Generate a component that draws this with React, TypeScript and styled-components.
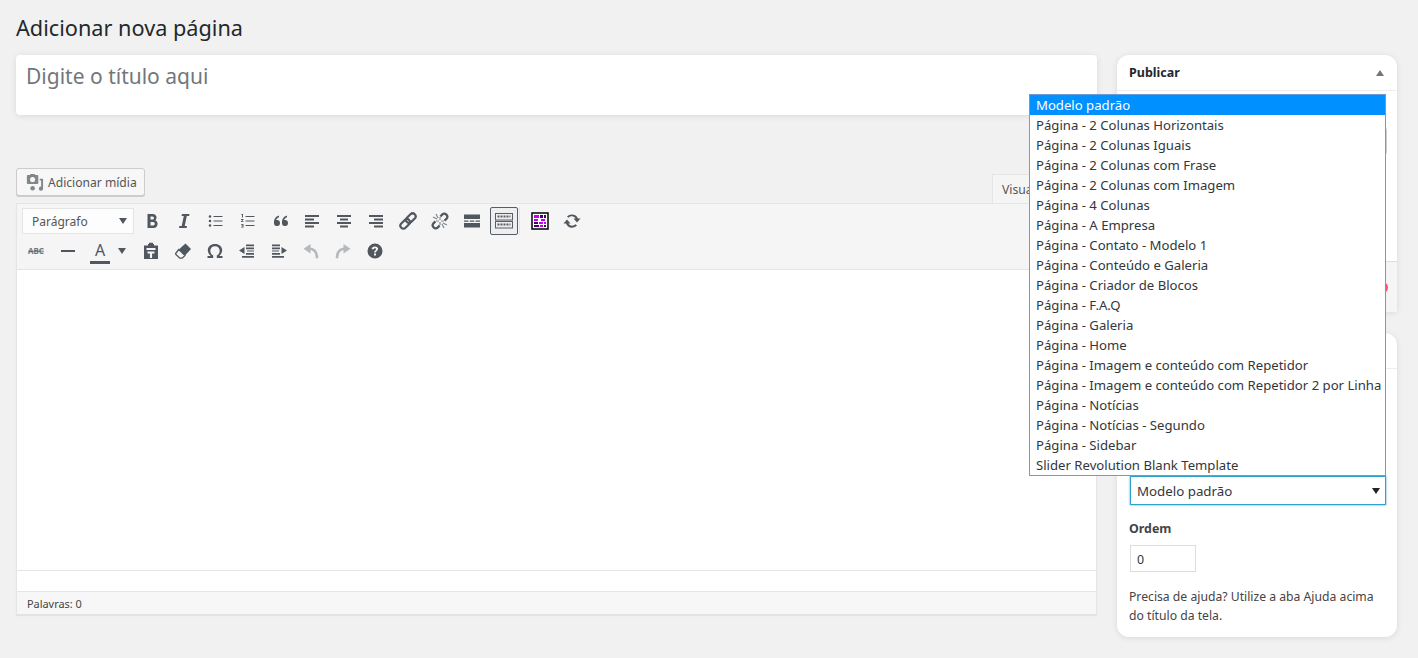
import styled, { createGlobalStyle } from "styled-components";
import type { ReactNode } from "react";

const GlobalStyle = createGlobalStyle`
	html, body {
		margin: 0;
		padding: 0;
		background: #f1f1f1;
	}
	body {
		font-family: "Noto Sans", "Open Sans", sans-serif;
		color: #444;
		overflow: hidden;
	}
`;

const Page = styled.div`
	position: relative;
	width: 1418px;
	height: 658px;
	box-sizing: border-box;
	padding: 13px 21px 0 16px;
	display: grid;
	grid-template-columns: 1081px 280px;
	column-gap: 20px;
	align-content: start;
`;

const Heading = styled.h1`
	grid-column: 1 / 3;
	margin: 0 0 11px;
	height: 31px;
	font-size: 21.7px;
	line-height: 29px;
	font-weight: 400;
	color: #23282d;
`;

const Main = styled.div`
	display: flex;
	flex-direction: column;
`;

const TitleBox = styled.div`
	height: 60px;
	box-sizing: border-box;
	padding: 6px 10px;
	background: #fff;
	border-radius: 4px;
	box-shadow: 0 1px 6px rgba(0, 0, 0, 0.1);
	font-size: 21px;
	line-height: 30px;
	color: #72777c;
`;

const MediaRow = styled.div`
	margin-top: 53px;
	height: 35px;
	display: flex;
	justify-content: space-between;
	align-items: flex-start;
`;

const MediaButton = styled.div`
	width: 129px;
	height: 28px;
	box-sizing: border-box;
	display: flex;
	align-items: center;
	gap: 4px;
	padding-left: 8px;
	background: #f7f7f7;
	border: 1px solid #ccc;
	border-radius: 3px;
	box-shadow: 0 1px 0 #ccc;
	font-size: 12.1px;
	color: #555;
`;

const VisualTab = styled.div`
	align-self: flex-end;
	width: 105px;
	height: 29px;
	box-sizing: border-box;
	padding: 6px 0 0 9px;
	background: #f5f5f5;
	border: 1px solid #e5e5e5;
	border-bottom: 0;
	font-size: 12.2px;
	line-height: 18px;
	color: #555;
`;

const Editor = styled.div`
	height: 412px;
	box-sizing: border-box;
	display: flex;
	flex-direction: column;
	background: #fff;
	border: 1px solid #e5e5e5;
	box-shadow: 0 1px 1px rgba(0, 0, 0, 0.06);
`;

const Toolbar = styled.div`
	height: 66px;
	flex: none;
	box-sizing: border-box;
	padding: 2px 0 0 5px;
	background: #f5f5f5;
	border-bottom: 1px solid #e5e5e5;
	display: flex;
	flex-direction: column;
`;

const ToolRow = styled.div`
	height: 30px;
	display: flex;
	align-items: center;
`;

const FormatSelect = styled.div`
	width: 112px;
	height: 26px;
	margin-right: 4px;
	box-sizing: border-box;
	display: flex;
	align-items: center;
	justify-content: space-between;
	padding: 0 6px 0 9px;
	background: #fdfdfd;
	border: 1px solid #e5e5e5;
	font-size: 12px;
	color: #555;
`;

const Caret = styled.span<{ $tone?: string }>`
	width: 0;
	height: 0;
	border-left: 4.5px solid transparent;
	border-right: 4.5px solid transparent;
	border-top: 6px solid ${(p) => p.$tone ?? "#50575e"};
`;

const ToolButton = styled.div<{ $active?: boolean }>`
	width: 28px;
	height: 28px;
	margin-right: 4px;
	box-sizing: border-box;
	flex: none;
	display: flex;
	align-items: center;
	justify-content: center;
	color: #50575e;
	border: 1px solid ${(p) => (p.$active ? "#555d66" : "transparent")};
	border-radius: 2px;
	background: ${(p) => (p.$active ? "#eee" : "transparent")};
`;

const ColorButton = styled.div`
	width: 47px;
	height: 28px;
	margin-right: 4px;
	box-sizing: border-box;
	flex: none;
	display: flex;
	align-items: center;
	gap: 8px;
	padding-left: 4px;
`;

const ColorLetter = styled.span`
	width: 20px;
	height: 21px;
	margin-top: 1px;
	border-bottom: 3px solid #50575e;
	text-align: center;
	font-size: 16px;
	line-height: 20px;
	color: #50575e;
`;

const ToolDivider = styled.div`
	width: 1px;
	height: 28px;
	margin: 0 6px 0 -3px;
	background: #e5e5e5;
`;

const Area = styled.div`
	flex: 1;
	background: #fff;
	border-bottom: 1px solid #e5e5e5;
`;

const Spacer = styled.div`
	height: 20px;
	flex: none;
	background: #fff;
	border-bottom: 1px solid #e5e5e5;
`;

const StatusBar = styled.div`
	height: 22px;
	flex: none;
	box-sizing: border-box;
	padding-left: 10px;
	background: #f7f7f7;
	font-size: 10.9px;
	line-height: 24px;
	color: #444;
`;

const Side = styled.div`
	display: flex;
	flex-direction: column;
	gap: 21px;
`;

const Card = styled.div<{ $height: number }>`
	height: ${(p) => p.$height}px;
	box-sizing: border-box;
	background: #fff;
	border-radius: 12px;
	box-shadow: 0 1px 6px rgba(0, 0, 0, 0.1);
	overflow: hidden;
`;

const PublishCard = styled(Card)`
	border-radius: 12px 12px 0 0;
`;

const CardHeader = styled.div`
	height: 36px;
	box-sizing: border-box;
	padding: 0 13px 0 12px;
	display: flex;
	align-items: center;
	justify-content: space-between;
	border-bottom: 1px solid #eee;
	font-size: 12.5px;
	font-weight: 700;
	color: #23282d;
`;

const UpArrow = styled.span`
	width: 0;
	height: 0;
	border-left: 4.5px solid transparent;
	border-right: 4.5px solid transparent;
	border-bottom: 6px solid #72777c;
`;

const PublishBody = styled.div`
	position: relative;
	height: 221px;
`;

const PublishFooter = styled.div`
	position: absolute;
	left: 0;
	right: 0;
	bottom: 0;
	height: 51px;
	box-sizing: border-box;
	background: #f5f5f5;
	border-top: 1px solid #ddd;
`;

const HiddenButton = styled.div`
	position: absolute;
	right: 10px;
	top: 36px;
	width: 60px;
	height: 26px;
	background: #f7f7f7;
	border: 1px solid #ccc;
	border-radius: 3px;
`;

const TrashDot = styled.div`
	position: absolute;
	right: 9px;
	top: 191px;
	width: 11px;
	height: 11px;
	border-radius: 50%;
	background: #ff4d6d;
`;

const AttributesBody = styled.div`
	padding: 107px 11px 0 13px;
	display: flex;
	flex-direction: column;
`;

const TemplateSelect = styled.div`
	height: 29px;
	box-sizing: border-box;
	display: flex;
	align-items: center;
	justify-content: space-between;
	padding: 0 5px 0 6px;
	background: #fff;
	border: 1px solid #2ea2cc;
	box-shadow: 0 0 2px rgba(30, 140, 190, 0.8);
	font-size: 13.3px;
	color: #32373c;
`;

const FieldLabel = styled.div`
	margin: 15px 0 0 -1px;
	font-size: 12.4px;
	line-height: 17px;
	font-weight: 700;
	color: #444;
`;

const OrderInput = styled.div`
	margin-top: 8px;
	width: 66px;
	height: 27px;
	box-sizing: border-box;
	padding: 0 6px;
	border: 1px solid #ddd;
	font-size: 12.4px;
	line-height: 27px;
	color: #32373c;
`;

const HelpText = styled.p`
	margin: 15px 0 0 -1px;
	font-size: 12.2px;
	line-height: 19px;
	color: #444;
`;

const Dropdown = styled.ul`
	position: absolute;
	left: 1029px;
	top: 94px;
	width: 357px;
	height: 382px;
	margin: 0;
	padding: 0;
	box-sizing: border-box;
	list-style: none;
	background: #fff;
	border: 1px solid #6d9bd8;
`;

const Option = styled.li<{ $selected?: boolean }>`
	height: 20px;
	padding-left: 6px;
	font-size: 13.15px;
	line-height: 20px;
	white-space: nowrap;
	overflow: hidden;
	background: ${(p) => (p.$selected ? "#0090ff" : "transparent")};
	color: ${(p) => (p.$selected ? "#fff" : "#32373c")};
`;

const Svg = ({ children }: { children: ReactNode }) => (
	<svg width="20" height="20" viewBox="0 0 20 20" fill="currentColor">
		{children}
	</svg>
);

const templates = [
	"Modelo padrão",
	"Página - 2 Colunas Horizontais",
	"Página - 2 Colunas Iguais",
	"Página - 2 Colunas com Frase",
	"Página - 2 Colunas com Imagem",
	"Página - 4 Colunas",
	"Página - A Empresa",
	"Página - Contato - Modelo 1",
	"Página - Conteúdo e Galeria",
	"Página - Criador de Blocos",
	"Página - F.A.Q",
	"Página - Galeria",
	"Página - Home",
	"Página - Imagem e conteúdo com Repetidor",
	"Página - Imagem e conteúdo com Repetidor 2 por Linha",
	"Página - Notícias",
	"Página - Notícias - Segundo",
	"Página - Sidebar",
	"Slider Revolution Blank Template",
];

const MediaIcon = () => (
	<svg width="19" height="19" viewBox="0 0 20 20" fill="#82878c">
		<path
			fillRule="evenodd"
			d="M3 2h2l1-1h4l1 1h2a1 1 0 0 1 1 1v7.500a1 1 0 0 1-1 1H3a1 1 0 0 1-1-1V3a1 1 0 0 1 1-1zm5 2.200a2.700 2.700 0 1 0 0 5.400 2.700 2.700 0 0 0 0-5.400z"
		/>
		<path d="M15.500 6H19v10.500a2.200 2.200 0 1 1-2-2.200V8h-1.500z" />
		<circle cx="8" cy="16" r="2.400" />
	</svg>
);

const LinkGlyph = ({ broken }: { broken?: boolean }) => (
	<svg width="20" height="20" viewBox="0 0 20 20" fill="none" stroke="currentColor" strokeWidth="2.200">
		<g transform="rotate(-45 10 10)">
			{broken ? (
				<>
					<path d="M6.500 7H4a3 3 0 0 0 0 6h2.500" />
					<path d="M13.500 7H16a3 3 0 0 1 0 6h-2.500" />
				</>
			) : (
				<>
					<rect x="0.500" y="7" width="11" height="6" rx="3" />
					<rect x="8.500" y="7" width="11" height="6" rx="3" />
				</>
			)}
		</g>
		{broken && (
			<path
				stroke="#82878c"
				strokeWidth="1.200"
				d="M3 6l4 2M6 3l2 4M14 17l-2-4M17 14l-4-2M10 6v3M6 10h3M14 10h-3M10 14v-3"
			/>
		)}
	</svg>
);

const firstRow: ReactNode[] = [
	<Svg key="b">
		<path
			fillRule="evenodd"
			d="M5.500 3h5.300a3.800 3.800 0 0 1 2.700 6.500A4 4 0 0 1 11.500 17h-6zm3 2.500v3h2a1.500 1.500 0 0 0 0-3zm0 5.500v3.500h2.600a1.750 1.750 0 0 0 0-3.500z"
		/>
	</Svg>,
	<Svg key="i">
		<path d="M8 3h7.500l-.4 2h-2.300l-2.100 10h2.300l-.4 2H5l.4-2h2.300l2.100-10H7.500z" />
	</Svg>,
	<Svg key="ul">
		<path d="M4 4.200a1.300 1.300 0 1 1 0 2.600 1.300 1.300 0 0 1 0-2.600zm0 4.500a1.300 1.300 0 1 1 0 2.600 1.300 1.300 0 0 1 0-2.600zm0 4.500a1.300 1.300 0 1 1 0 2.600 1.300 1.300 0 0 1 0-2.600zM7.500 5h9v1h-9zm0 4.500h9v1h-9zm0 4.500h9v1h-9z" />
	</Svg>,
	<Svg key="ol">
		<path d="M7.500 5h9v1h-9zm0 4.500h9v1h-9zm0 4.500h9v1h-9zM4 3h1v3.500H4V4H3.200v-.6zM3 8h2.500v.8L4 10.200h1.500v.8H3v-.7L4.500 9H3zm0 5h2.500v3.500H3v-.7h1.500v-.7H3.600v-.7h.9v-.7H3z" />
	</Svg>,
	<Svg key="q">
		<path d="M9 4.500v1.800c-1.600.6-2.600 1.500-2.800 2.800.3-.1.6-.1.8-.1a3 3 0 1 1-3 3.200C3.700 8.400 5.700 5.400 9 4.500zm8 0v1.800c-1.600.6-2.600 1.500-2.800 2.800.3-.1.600-.1.800-.1a3 3 0 1 1-3 3.200c-.3-3.800 1.700-6.800 5-7.700z" />
	</Svg>,
	<Svg key="al">
		<path d="M3 4h14v2H3zm0 3.500h9v2H3zM3 11h14v2H3zm0 3.500h9v2H3z" />
	</Svg>,
	<Svg key="ac">
		<path d="M3 4h14v2H3zm3 3.500h8v2H6zM3 11h14v2H3zm3 3.500h8v2H6z" />
	</Svg>,
	<Svg key="ar">
		<path d="M3 4h14v2H3zm5 3.500h9v2H8zM3 11h14v2H3zm5 3.500h9v2H8z" />
	</Svg>,
	<LinkGlyph key="link" />,
	<LinkGlyph key="unlink" broken />,
	<Svg key="more">
		<path d="M2 3.500h16v4.500H2zm0 8.500h16v4.500H2zM2 9.500h4.500v1.200H2zm5.800 0h4.500v1.200H7.800zm5.700 0H18v1.200h-4.500z" />
	</Svg>,
];

const secondRow: ReactNode[] = [
	<svg key="abc" width="20" height="20" viewBox="0 0 20 20">
		<text x="10" y="13" textAnchor="middle" fontSize="8" fontWeight="700" fill="#72777c" fontFamily="Noto Sans, sans-serif">
			ABC
		</text>
		<path d="M2 10.200h16" stroke="#50575e" strokeWidth="0.800" />
	</svg>,
	<Svg key="hr">
		<path d="M3 9h14v2H3z" />
	</Svg>,
];

const thirdRow: ReactNode[] = [
	<Svg key="paste">
		<path
			fillRule="evenodd"
			d="M3 4.500h4V3h1V1.800h4V3h1v1.500h4V18H3zM5.500 7v2h9V7zM6.500 10.500v2h2.400V17h2.200v-4.500h2.400v-2z"
		/>
	</Svg>,
	<svg key="eraser" width="20" height="20" viewBox="0 0 20 20">
		<path d="M12.500 2.500 18 8l-6 6.500L5.800 8.500z" fill="#50575e" />
		<path d="M5.800 8.500 12 14.500 9.200 17.200H6.800L3 13.500a1 1 0 0 1 0-1.500z" fill="#f5f5f5" stroke="#50575e" strokeWidth="1.300" />
	</svg>,
	<Svg key="omega">
		<path d="M2.500 17v-2h3.300C3.900 13.500 2.800 11.500 2.800 9.300 2.800 5.600 5.800 3 10 3s7.200 2.600 7.200 6.300c0 2.200-1.100 4.200-3 5.700h3.300v2H11.800v-2.500c1.700-.8 2.900-2.500 2.900-4.700 0-2.700-1.900-4.600-4.700-4.600S5.300 7.100 5.300 9.800c0 2.200 1.200 3.900 2.900 4.700V17z" />
	</Svg>,
	<Svg key="outdent">
		<path d="M9 3.500h8v1.800H9zM9 6.500h8v1.800H9zM10 9.500h7v1H10zM9 12h8v1.800H9zM5 15h12v1.800H5zM7.500 6v7L2 9.500z" />
	</Svg>,
	<Svg key="indent">
		<path d="M3 3.500h8v1.800H3zM3 6.500h8v1.800H3zM3 9.500h7v1H3zM3 12h8v1.800H3zM3 15h12v1.800H3zM12.500 6v7L18 9.500z" />
	</Svg>,
	<svg key="undo" width="20" height="20" viewBox="0 0 20 20" fill="#b4b9be">
		<path d="M9.500 3v9.500L2.500 7.700z" />
		<path d="M8 7.800c5 0 8 3 8 9.500" fill="none" stroke="#b4b9be" strokeWidth="2.600" />
	</svg>,
	<svg key="redo" width="20" height="20" viewBox="0 0 20 20" fill="#b4b9be">
		<path d="M10.500 3v9.500l7-4.800z" />
		<path d="M12 7.800c-5 0-8 3-8 9.500" fill="none" stroke="#b4b9be" strokeWidth="2.600" />
	</svg>,
	<Svg key="help">
		<path
			fillRule="evenodd"
			d="M10 2.500a7.500 7.500 0 1 1 0 15 7.500 7.500 0 0 1 0-15zM9 12.500v2h2v-2zM10 5.500c-2 0-3.200 1-3.300 2.800h2c.1-.7.500-1 1.200-1 .7 0 1.100.4 1.100.9 0 1.200-2 1.400-2 3.300h2c0-1.500 2.100-1.700 2.100-3.500 0-1.500-1.200-2.500-3.100-2.500z"
		/>
	</Svg>,
];

const App = () => {
	return (
		<Page>
			<GlobalStyle />
			<Heading>Adicionar nova página</Heading>
			<Main>
				<TitleBox>Digite o título aqui</TitleBox>
				<MediaRow>
					<MediaButton>
						<MediaIcon />
						Adicionar mídia
					</MediaButton>
					<VisualTab>Visual</VisualTab>
				</MediaRow>
				<Editor>
					<Toolbar>
						<ToolRow>
							<FormatSelect>
								Parágrafo
								<Caret />
							</FormatSelect>
							{firstRow.map((icon, i) => (
								<ToolButton key={i}>{icon}</ToolButton>
							))}
							<ToolButton $active>
								<svg width="20" height="20" viewBox="0 0 20 20" fill="none" stroke="#555d66">
									<rect x="1.500" y="2.500" width="17" height="6.500" />
									<rect x="1.500" y="10.500" width="17" height="6.500" />
									<path d="M3.500 5.500h13M3.500 13.500h13" strokeWidth="2" strokeDasharray="2 1" />
								</svg>
							</ToolButton>
							<ToolDivider />
							<ToolButton>
								<svg width="18" height="18" viewBox="0 0 18 18">
									<rect x="1" y="1" width="16" height="16" fill="#fff" stroke="#000" strokeWidth="1.500" />
									<path fill="#c000f0" d="M3 3h5v3H3zM10 7h4v2h-4zM3 7h4v2H3zM8 10h4v2H8zM13 10h2v2h-2zM9 13h3v2H9z" />
									<path fill="#44006a" d="M9 3h3v3H9zM13 3h2v3h-2zM3 10h4v2H3zM3 13h5v2H3zM13 13h2v2h-2z" />
								</svg>
							</ToolButton>
							<ToolButton>
								<Svg>
									<path d="M10 3.500a6.500 6.500 0 0 1 6 4h2.500L15 11.500 11.500 7.500h2.200A4.500 4.500 0 0 0 6.500 6.800L5 5.500A6.500 6.500 0 0 1 10 3.500zM5 8.500l3.500 4H6.300a4.500 4.500 0 0 0 7.200.7l1.500 1.300a6.500 6.500 0 0 1-11-2h-2.500z" />
								</Svg>
							</ToolButton>
						</ToolRow>
						<ToolRow>
							{secondRow.map((icon, i) => (
								<ToolButton key={i}>{icon}</ToolButton>
							))}
							<ColorButton>
								<ColorLetter>A</ColorLetter>
								<Caret />
							</ColorButton>
							{thirdRow.map((icon, i) => (
								<ToolButton key={i}>{icon}</ToolButton>
							))}
						</ToolRow>
					</Toolbar>
					<Area />
					<Spacer />
					<StatusBar>Palavras: 0</StatusBar>
				</Editor>
			</Main>
			<Side>
				<PublishCard $height={257}>
					<CardHeader>
						Publicar
						<UpArrow />
					</CardHeader>
					<PublishBody>
						<HiddenButton />
						<PublishFooter />
						<TrashDot />
					</PublishBody>
				</PublishCard>
				<Card $height={304}>
					<CardHeader />
					<AttributesBody>
						<TemplateSelect>
							Modelo padrão
							<Caret $tone="#222" />
						</TemplateSelect>
						<FieldLabel>Ordem</FieldLabel>
						<OrderInput>0</OrderInput>
						<HelpText>Precisa de ajuda? Utilize a aba Ajuda acima do título da tela.</HelpText>
					</AttributesBody>
				</Card>
			</Side>
			<Dropdown>
				{templates.map((name, i) => (
					<Option key={name} $selected={i === 0}>
						{name}
					</Option>
				))}
			</Dropdown>
		</Page>
	);
};

export default App;
